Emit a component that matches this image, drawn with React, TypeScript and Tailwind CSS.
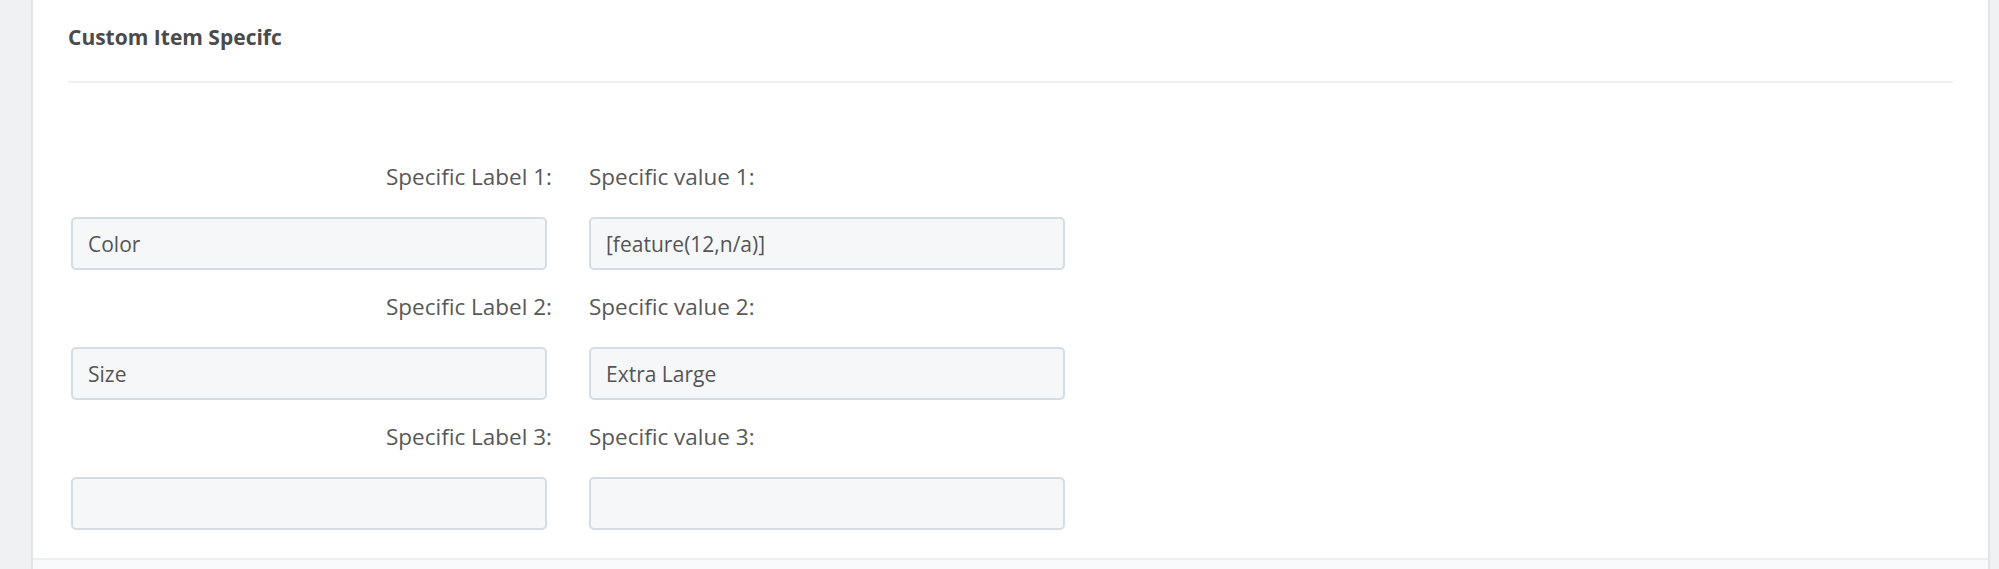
const rows = [
  { n: 1, label: 'Color', value: '[feature(12,n/a)]' },
  { n: 2, label: 'Size', value: 'Extra Large' },
  { n: 3, label: '', value: '' },
];

function Field({ value }: { value: string }) {
  return (
    <input
      readOnly
      value={value}
      className="h-[53px] w-[476px] rounded-[5px] border-2 border-[#d3dde3] bg-[#f5f7f9] px-[15px] text-[21px] text-[#555] outline-none"
    />
  );
}

export default function App() {
  return (
    <div className="flex h-[569px] w-full overflow-hidden bg-[#eff1f3] pr-[9px] pl-[31px] font-['Open_Sans',sans-serif]">
      <div className="flex flex-1 flex-col border-x-2 border-[#e2e5e8] bg-white">
        <div className="mx-[35px] h-[83px] border-b-2 border-[#eeeff1] pt-[22px]">
          <h2 className="text-[21px] font-bold leading-[30px] text-[#4b4b4b]">Custom Item Specifc</h2>
        </div>

        <div className="flex flex-col gap-[22px] pt-[79px] pl-[38px]">
          {rows.map((r) => (
            <div key={r.n} className="flex gap-[37px]">
              <div className="flex w-[481px] flex-col">
                <span className="mb-[25px] h-[30px] text-right text-[22.5px] leading-[30px] text-[#585858]">
                  Specific Label {r.n}:
                </span>
                <Field value={r.label} />
              </div>
              <div className="flex flex-col">
                <span className="mb-[25px] h-[30px] text-[22.5px] leading-[30px] text-[#585858]">
                  Specific value {r.n}:
                </span>
                <Field value={r.value} />
              </div>
            </div>
          ))}
        </div>

        <div className="mt-auto h-[11px] border-t-2 border-[#eceef0] bg-[#f8f9fa]" />
      </div>
    </div>
  );
}
